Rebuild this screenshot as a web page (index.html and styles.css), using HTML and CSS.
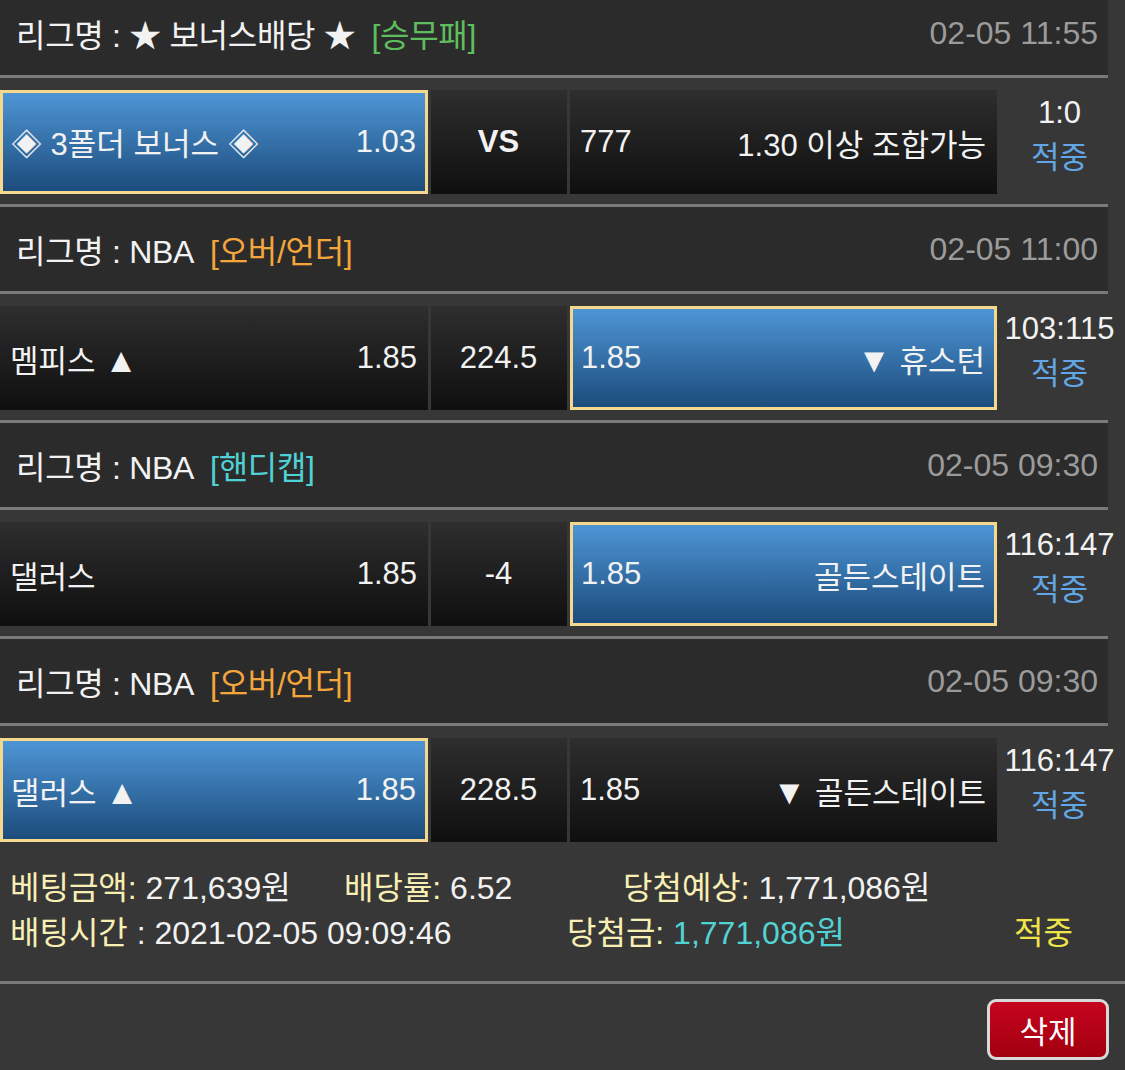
FILE: index.html
```html
<!DOCTYPE html>
<html lang="ko">
<head>
    <meta charset="UTF-8">
    <meta name="viewport" content="width=device-width, initial-scale=1.0">
    <title>배팅내역</title>
    <link rel="stylesheet" href="styles.css">
</head>
<body>
    <div class="slip">
        <div class="game">
            <div class="league first">
                <span class="league-name">리그명 : ★ 보너스배당 ★<span class="tag green">[승무패]</span></span>
                <span class="time">02-05 11:55</span>
            </div>
            <div class="odds">
                <div class="pick selected"><span>◈ 3폴더 보너스 ◈</span><span>1.03</span></div>
                <div class="pick mid"><b>VS</b></div>
                <div class="pick"><span>777</span><span>1.30 이상 조합가능</span></div>
                <div class="result">1:0<br><span class="hit">적중</span></div>
            </div>
        </div>

        <div class="game">
            <div class="league">
                <span class="league-name">리그명 : NBA<span class="tag orange">[오버/언더]</span></span>
                <span class="time">02-05 11:00</span>
            </div>
            <div class="odds">
                <div class="pick"><span>멤피스 <i class="tri">▲</i></span><span>1.85</span></div>
                <div class="pick mid">224.5</div>
                <div class="pick selected"><span>1.85</span><span><i class="tri">▼</i> 휴스턴</span></div>
                <div class="result">103:115<br><span class="hit">적중</span></div>
            </div>
        </div>

        <div class="game">
            <div class="league">
                <span class="league-name">리그명 : NBA<span class="tag cyan">[핸디캡]</span></span>
                <span class="time">02-05 09:30</span>
            </div>
            <div class="odds">
                <div class="pick"><span>댈러스</span><span>1.85</span></div>
                <div class="pick mid">-4</div>
                <div class="pick selected"><span>1.85</span><span>골든스테이트</span></div>
                <div class="result">116:147<br><span class="hit">적중</span></div>
            </div>
        </div>

        <div class="game">
            <div class="league">
                <span class="league-name">리그명 : NBA<span class="tag orange">[오버/언더]</span></span>
                <span class="time">02-05 09:30</span>
            </div>
            <div class="odds">
                <div class="pick selected"><span>댈러스 <i class="tri">▲</i></span><span>1.85</span></div>
                <div class="pick mid">228.5</div>
                <div class="pick"><span>1.85</span><span><i class="tri">▼</i> 골든스테이트</span></div>
                <div class="result">116:147<br><span class="hit">적중</span></div>
            </div>
        </div>

        <div class="summary">
            <div class="sum-row">
                <span class="c1"><span class="label">베팅금액:</span> 271,639원</span>
                <span class="c2"><span class="label">배당률:</span> 6.52</span>
                <span><span class="label">당첨예상:</span> 1,771,086원</span>
            </div>
            <div class="sum-row">
                <span class="c1 wide"><span class="label">배팅시간</span> : 2021-02-05 09:09:46</span>
                <span class="c2 wide"><span class="label">당첨금:</span> <span class="won">1,771,086원</span></span>
                <span class="state">적중</span>
            </div>
        </div>

        <div class="actions">
            <button class="btn-delete">삭제</button>
        </div>
    </div>
</body>
</html>
```

FILE: styles.css
```css
body {
    margin: 0;
    background: #373737;
    color: #f2f2f2;
    font-family: "Liberation Sans", "Noto Sans CJK KR", sans-serif;
    font-size: 32px;
    overflow: hidden;
}
.slip {
    margin-top: -9px;
}
.league {
    height: 84px;
    margin-right: 17px;
    padding: 0 10px 0 16px;
    display: flex;
    align-items: center;
    justify-content: space-between;
    background: #2b2b2b;
    border-top: 3px solid #7a7a7a;
    border-bottom: 3px solid #7a7a7a;
}
.league.first {
    border-top: none;
}
.league-name {
    letter-spacing: -0.3px;
}
.tag {
    margin-left: 16px;
}
.tag.green { color: #5fbd5f; }
.tag.orange { color: #f4a53b; }
.tag.cyan { color: #4fd1d6; }
.time {
    color: #9b9b9b;
}
.odds {
    height: 126px;
    box-sizing: border-box;
    padding: 12px 0 10px;
    display: grid;
    grid-template-columns: 428px 136px 427px 1fr;
    column-gap: 3px;
    font-size: 31px;
}
.pick {
    box-sizing: border-box;
    display: flex;
    align-items: center;
    justify-content: space-between;
    padding: 0 11px 0 10px;
    background: linear-gradient(#2e2e2e, #0f0f0f);
    white-space: nowrap;
}
.pick.selected {
    border: 3px solid #f4d88e;
    padding: 0 9px 0 8px;
    background: linear-gradient(#4e95d5, #1c4c7c);
}
.pick.mid {
    justify-content: center;
}
.tri {
    font-style: normal;
    font-size: 34px;
}
.result {
    padding-right: 6px;
    text-align: center;
    line-height: 45px;
    white-space: nowrap;
}
.hit {
    color: #62a7e5;
}
.summary {
    height: 132px;
    box-sizing: border-box;
    padding: 14px 0 0 10px;
    line-height: 45px;
    border-bottom: 3px solid #7a7a7a;
}
.sum-row {
    display: flex;
    white-space: nowrap;
}
.c1 { width: 334px; }
.c2 { width: 279px; }
.c1.wide { width: 557px; }
.c2.wide { width: 447px; }
.label {
    color: #f7efb3;
}
.won {
    color: #52d3d3;
}
.state {
    color: #efe54b;
}
.actions {
    display: flex;
    justify-content: flex-end;
    padding: 15px 16px 0 0;
}
.btn-delete {
    width: 122px;
    height: 61px;
    border: 3px solid #d9d9d9;
    border-radius: 9px;
    background: linear-gradient(#c6041f, #a1000f);
    color: #fff;
    font-family: inherit;
    font-size: 31px;
    cursor: pointer;
}
```
